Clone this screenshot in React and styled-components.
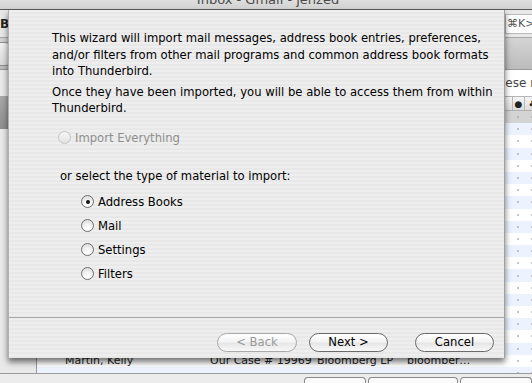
import React from "react";
import styled, { createGlobalStyle } from "styled-components";

const Global = createGlobalStyle`
  html, body { margin: 0; padding: 0; overflow: hidden; }
  body { width: 532px; height: 383px; font-family: "DejaVu Sans", "Lucida Grande", sans-serif; }
`;

const Screen = styled.div`
  position: relative;
  width: 532px;
  height: 383px;
  overflow: hidden;
  background: #e4e4e4;
  display: flex;
  flex-direction: column;
`;

const TitleBar = styled.div`
  height: 9px;
  flex: none;
  background: linear-gradient(#dedede, #d2d2d2);
  border-bottom: 1px solid #5a5a5a;
  display: flex;
  justify-content: center;
  align-items: flex-end;
  overflow: hidden;
`;

const Title = styled.div`
  font-size: 13px;
  color: #4a4a4a;
  line-height: 13px;
  margin-bottom: 3px;
  padding-left: 4px;
`;

const Toolbar = styled.div`
  height: 27px;
  flex: none;
  display: flex;
  align-items: center;
  justify-content: space-between;
  background: #e8e8e8;
`;

const ToolLabel = styled.span`
  font-size: 12px;
  font-weight: bold;
  color: #222;
`;

const SearchField = styled.div`
  width: 40px;
  height: 18px;
  margin-right: -16px;
  background: #fff;
  border: 1px solid #b8b8b8;
  font-size: 11px;
  color: #555;
  display: flex;
  align-items: center;
  padding-left: 1px;
  white-space: nowrap;
`;

const TabBand = styled.div`
  height: 31px;
  flex: none;
  display: flex;
  align-items: center;
  background: linear-gradient(#d4d4d4, #bcbcbc);
  border-top: 1px solid #a8a8a8;
  border-bottom: 1px solid #9a9a9a;
`;

const Tab = styled.div`
  width: 60px;
  height: 22px;
  margin-left: -50px;
  border: 1px solid #8e8e8e;
  border-radius: 0 6px 6px 0;
  background: linear-gradient(#f2f2f2, #d8d8d8);
`;

const Main = styled.div`
  flex: 1;
  display: flex;
  min-height: 0;
`;

const FolderPane = styled.div`
  width: 36px;
  flex: none;
  background: #e9e9e9;
  border-right: 1px solid #9a9a9a;
  display: flex;
  flex-direction: column;
`;

const FolderSelected = styled.div`
  height: 33px;
  margin-top: 26px;
  background: linear-gradient(#a9a9a9, #8e8e8e);
`;

const ThreadPane = styled.div`
  flex: 1;
  margin-right: -8px;
  display: flex;
  flex-direction: column;
  background: #fff;
  overflow: hidden;
`;

const QuickSearch = styled.div`
  height: 26px;
  flex: none;
  background: #fff;
  display: flex;
  align-items: center;
  font-size: 12px;
  color: #444;
  border-bottom: 1px solid #b5b5b5;
  overflow: hidden;
  white-space: nowrap;
  padding-left: 411px;
`;

const cols = "24px 145px 107px 90px 70px 1fr 12px 16px";

const Header = styled.div`
  height: 13px;
  flex: none;
  display: grid;
  grid-template-columns: ${cols};
  background: linear-gradient(#f6f6f6, #dcdcdc);
  border-bottom: 1px solid #b0b0b0;
`;

const HeadCell = styled.div`
  border-left: 1px solid #b8b8b8;
  display: flex;
  align-items: center;
  justify-content: center;
  font-size: 9px;
  color: #222;
`;

const Row = styled.div`
  height: 12.2px;
  flex: none;
  display: grid;
  grid-template-columns: ${cols};
  align-items: center;
  background: ${(p) => (p.$sel ? "#d4d4d4" : p.$alt ? "#edf3fe" : "#fff")};
  font-size: 11px;
  color: #222;
  white-space: nowrap;
  overflow: hidden;
`;

const TextCell = styled.div`
  overflow: hidden;
  text-overflow: ellipsis;
  padding-left: 4px;
  line-height: 12px;
`;

const DotCell = styled.div`
  display: flex;
  align-items: center;
  justify-content: center;
`;

const TinyDot = styled.span`
  width: 2px;
  height: 2px;
  border-radius: 50%;
  background: #b0b0b0;
`;

const BottomBar = styled.div`
  height: 9px;
  flex: none;
  background: #ececec;
  border-top: 1px solid #9a9a9a;
  display: flex;
  justify-content: flex-end;
  align-items: flex-end;
  gap: 2px;
`;

const SmallBtn = styled.div`
  width: ${(p) => p.$w}px;
  height: 5px;
  border: 1px solid #888;
  border-bottom: none;
  border-radius: 4px 4px 0 0;
  background: #fafafa;
`;

/* ---- Sheet ---- */

const Sheet = styled.div`
  position: absolute;
  left: 8px;
  top: 10px;
  width: 497px;
  height: 348px;
  box-sizing: border-box;
  background: repeating-linear-gradient(to bottom, #eeeeee 0px, #eeeeee 2px, #e8e8e8 2px, #e8e8e8 4px);
  border-left: 1px solid #b0b0b0;
  border-right: 1px solid #a0a0a0;
  box-shadow: 0 4px 6px rgba(0, 0, 0, 0.55);
  display: flex;
  flex-direction: column;
  font-family: "DejaVu Sans", sans-serif;
  color: #000;
`;

const Content = styled.div`
  flex: 1;
  padding: 20px 0 0 43px;
  display: flex;
  flex-direction: column;
`;

const Para = styled.p`
  margin: 0 0 4px 0;
  font-size: 11.6px;
  line-height: 16.5px;
  white-space: nowrap;
`;

const Spacer = styled.div`
  height: ${(p) => p.$h}px;
  flex: none;
`;

const RadioRow = styled.label`
  display: flex;
  align-items: center;
  gap: 4px;
  font-size: 11.6px;
  height: 24px;
  flex: none;
  color: ${(p) => (p.$disabled ? "#8e8e8e" : "#000")};
  margin-left: ${(p) => p.$indent}px;
`;

const RadioCircle = styled.span`
  width: 13px;
  height: 13px;
  border-radius: 50%;
  box-sizing: border-box;
  border: 1px solid ${(p) => (p.$disabled ? "#c4c4c4" : "#6f6f6f")};
  background: ${(p) =>
    p.$disabled
      ? "linear-gradient(#f6f6f6, #e2e2e2)"
      : "radial-gradient(circle at 50% 80%, #ffffff 0%, #f4f4f4 40%, #d4d4d4 100%)"};
  display: flex;
  align-items: center;
  justify-content: center;
  flex: none;
`;

const Dot = styled.span`
  width: 4px;
  height: 4px;
  border-radius: 50%;
  background: #111;
`;

const GroupLabel = styled.div`
  font-size: 11.6px;
  margin: 15px 0 3px 8px;
  height: 22px;
  flex: none;
  display: flex;
  align-items: center;
`;

const Separator = styled.div`
  height: 1px;
  background: #a6a6a6;
  flex: none;
`;

const ButtonBar = styled.div`
  height: 40px;
  flex: none;
  box-sizing: border-box;
  display: flex;
  justify-content: flex-end;
  align-items: flex-start;
  padding: 15px 10px 0 0;
`;

const Button = styled.button`
  width: ${(p) => p.$w}px;
  height: 19px;
  margin-left: ${(p) => p.$gap}px;
  border-radius: 10px;
  border: 1px solid ${(p) => (p.disabled ? "#a9a9a9" : "#6a6a6a")};
  background: linear-gradient(#ffffff 0%, #f4f4f4 45%, #e6e6e6 55%, #f8f8f8 100%);
  font-family: "DejaVu Sans", sans-serif;
  font-size: 11.6px;
  color: ${(p) => (p.disabled ? "#9a9a9a" : "#000")};
  padding: 0;
  line-height: 17px;
`;

function Radio({ label, checked, disabled, indent }) {
  return (
    <RadioRow $disabled={disabled} $indent={indent}>
      <RadioCircle $disabled={disabled}>{checked && <Dot />}</RadioCircle>
      {label}
    </RadioRow>
  );
}

const rows = Array.from({ length: 22 }, (_, i) =>
  i === 20
    ? ["Martin, Kelly", "Our Case # 19969", "Bloomberg LP", "bloomberg business news"]
    : ["", "", "", ""]
);

export default function App() {
  return (
    <>
      <Global />
      <Screen>
        <TitleBar>
          <Title>Inbox - Gmail - jenzed</Title>
        </TitleBar>
        <Toolbar>
          <ToolLabel>B</ToolLabel>
          <SearchField>⌘K&gt;</SearchField>
        </Toolbar>
        <TabBand>
          <Tab />
        </TabBand>
        <Main>
          <FolderPane>
            <FolderSelected />
          </FolderPane>
          <ThreadPane>
            <QuickSearch>Search these results</QuickSearch>
            <Header>
              <HeadCell />
              <HeadCell />
              <HeadCell />
              <HeadCell />
              <HeadCell />
              <HeadCell />
              <HeadCell>●</HeadCell>
              <HeadCell>♣</HeadCell>
            </Header>
            {rows.map((r, i) => (
              <Row key={i} $sel={i === 0} $alt={i % 2 === 1}>
                <DotCell />
                <TextCell>{r[0]}</TextCell>
                <TextCell>{r[1]}</TextCell>
                <TextCell>{r[2]}</TextCell>
                <TextCell>{r[3]}</TextCell>
                <div />
                <DotCell><TinyDot /></DotCell>
                <DotCell><TinyDot /></DotCell>
              </Row>
            ))}
          </ThreadPane>
        </Main>
        <BottomBar>
          <SmallBtn $w={60} />
          <SmallBtn $w={88} />
          <SmallBtn $w={70} />
        </BottomBar>

        <Sheet>
          <Content>
            <Para>
              This wizard will import mail messages, address book entries, preferences,
              <br />
              and/or filters from other mail programs and common address book formats
              <br />
              into Thunderbird.
            </Para>
            <Para>
              Once they have been imported, you will be able to access them from within
              <br />
              Thunderbird.
            </Para>
            <Spacer $h={5} />
            <Radio label="Import Everything" disabled indent={6} />
            <GroupLabel>or select the type of material to import:</GroupLabel>
            <Radio label="Address Books" checked indent={29} />
            <Radio label="Mail" indent={29} />
            <Radio label="Settings" indent={29} />
            <Radio label="Filters" indent={29} />
          </Content>
          <Separator />
          <ButtonBar>
            <Button disabled $w={80} $gap={0}>&lt; Back</Button>
            <Button $w={79} $gap={12}>Next &gt;</Button>
            <Button $w={79} $gap={27}>Cancel</Button>
          </ButtonBar>
        </Sheet>
      </Screen>
    </>
  );
}
